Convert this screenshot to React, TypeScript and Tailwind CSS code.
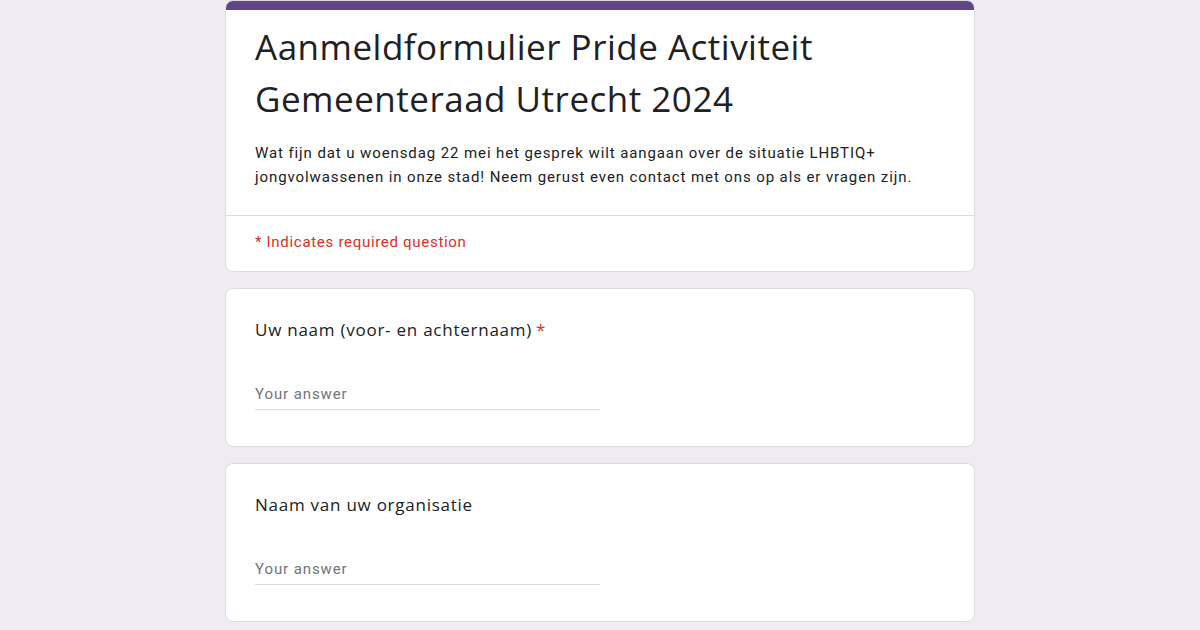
export default function App() {
  const questions = [
    { label: 'Uw naam (voor- en achternaam)', required: true },
    { label: 'Naam van uw organisatie', required: false },
  ];

  return (
    <div className="min-h-[630px] w-full overflow-hidden bg-[#efebf3] font-['Roboto',sans-serif] text-[#202124]">
      <div className="mx-auto flex w-[750px] flex-col gap-4">
        {/* header card */}
        <div className="overflow-hidden rounded-lg border border-[#dadce0] bg-white">
          <div className="h-[9px] bg-[#614586]" />
          <div className="px-[29px] pb-[26px] pt-[11px]">
            <h1 className="font-['Open_Sans',sans-serif] text-[35px] leading-[52px] tracking-[0.5px]">
              Aanmeldformulier Pride Activiteit Gemeenteraad Utrecht 2024
            </h1>
            <p className="mt-[16px] text-[15px] leading-[24px] tracking-[0.9px]">
              Wat fijn dat u woensdag 22 mei het gesprek wilt aangaan over de situatie LHBTIQ+ jongvolwassenen in onze
              stad! Neem gerust even contact met ons op als er vragen zijn.
            </p>
          </div>
          <div className="border-t border-[#dadce0] px-[29px] pb-[17px] pt-[14px] text-[15px] leading-[24px] tracking-[0.7px] text-[#d93025]">
            * Indicates required question
          </div>
        </div>

        {questions.map((q) => (
          <div key={q.label} className="rounded-lg border border-[#dadce0] bg-white px-[29px] pb-[36px] pt-[29px]">
            <div className="font-['Open_Sans',sans-serif] text-[17px] leading-[24px] tracking-[0.75px]">
              {q.label}
              {q.required ? <span className="ml-1 text-[#d93025]">*</span> : null}
            </div>
            <div className="mt-[41px] w-[345px] border-b border-[#dadce0] pb-[4px] text-[15px] leading-[22px] tracking-[0.9px] text-[#70757a]">
              Your answer
            </div>
          </div>
        ))}
      </div>
    </div>
  );
}
